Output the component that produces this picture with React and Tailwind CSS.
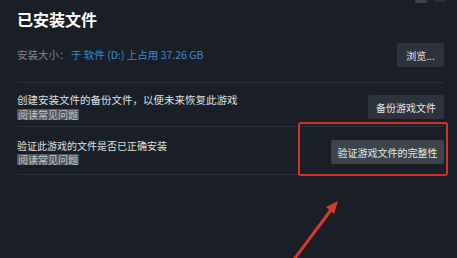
import React from "react";

const font = { fontFamily: '"Noto Sans CJK SC", "Noto Sans", sans-serif' };

const FaqLink = () => (
  <span className="block bg-[#50555d] text-[#c3c7cc] text-[10px] leading-[11px] px-[1px]">
    阅读常见问题
  </span>
);

const ActionRow = ({ text, button, light, textSize, btnW, pt, pb }) => (
  <div className={`flex items-center justify-between border-b border-[#2a3039] ${pt} ${pb}`}>
    <div className="flex flex-col items-start">
      <div className={`h-[14px] flex items-center text-[#dfe2e6] ${textSize}`}>{text}</div>
      <div className="h-[14px] flex items-center">
        <FaqLink />
      </div>
    </div>
    <button
      className={`h-[24px] rounded-[2px] text-[10px] text-[#e6e8ea] ${btnW} ${
        light ? "bg-[#3e444d]" : "bg-[#2d333c]"
      }`}
    >
      {button}
    </button>
  </div>
);

export default function App() {
  return (
    <div
      className="relative w-[457px] h-[258px] overflow-hidden bg-[#1a1f27] pl-[17px] pr-[13px]"
      style={font}
    >
      {/* faint header remnants top right */}
      <div className="absolute top-0 right-[12px] flex gap-[8px]">
        <span className="w-[12px] h-[3px] bg-[#3b4049]" />
        <span className="w-[10px] h-[2px] bg-[#2d323a]" />
      </div>

      <h1 className="pt-[8px] text-[16px] leading-[22px] font-bold text-white">已安装文件</h1>

      <div className="mt-[13px] flex items-center justify-between border-b border-[#2a3039] pb-[15px]">
        <div className="flex items-center text-[10.5px]">
          <span className="text-[#7f8791] w-[54px]">安装大小：</span>
          <span className="text-[#3b8bd3]">于 软件 (D:) 上占用 37.26 GB</span>
        </div>
        <button className="h-[24px] w-[47px] rounded-[2px] bg-[#2d333c] text-[10px] text-[#e6e8ea]">
          浏览...
        </button>
      </div>

      <ActionRow
        text="创建安装文件的备份文件，以便未来恢复此游戏"
        button="备份游戏文件"
        textSize="text-[10.5px]"
        btnW="w-[76px]"
        pt="pt-[10px]"
        pb="pb-[5px]"
      />
      <ActionRow
        text="验证此游戏的文件是否已正确安装"
        button="验证游戏文件的完整性"
        textSize="text-[10px]"
        btnW="w-[113px]"
        light
        pt="pt-[11px]"
        pb="pb-[8px]"
      />

      {/* red highlight box */}
      <div className="absolute left-[298px] top-[122px] w-[150px] h-[54px] border-[2.5px] border-[#d2322c] rounded-[3px]" />

      {/* red arrow */}
      <svg className="absolute left-0 top-0" width="457" height="258" viewBox="0 0 457 258">
        <line x1="292" y1="262" x2="331" y2="210" stroke="#d63a2f" strokeWidth="3" strokeLinecap="round" />
        <polygon points="338,201 326,207 334,214" fill="#d63a2f" />
      </svg>
    </div>
  );
}
